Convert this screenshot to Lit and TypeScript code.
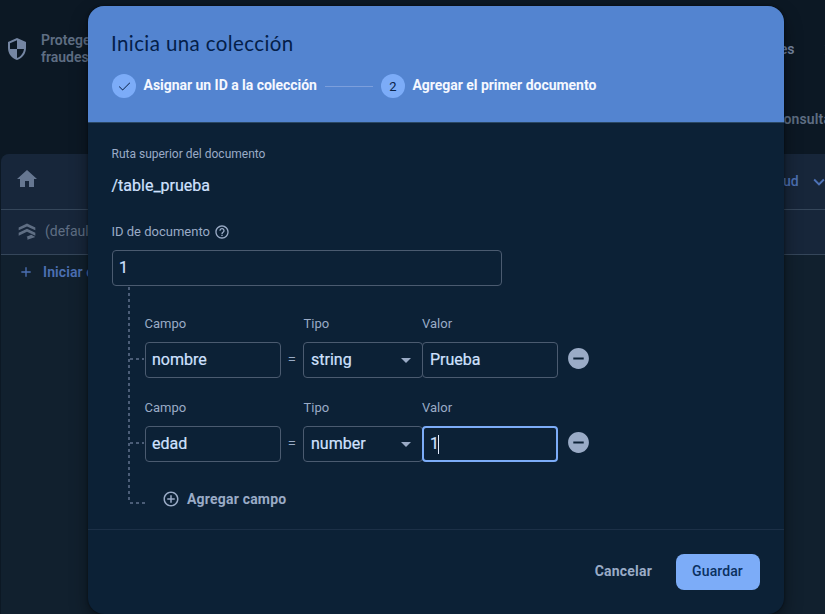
import { LitElement, html, css, svg, nothing } from "lit";
import { customElement, property } from "lit/decorators.js";
import { classMap } from "lit/directives/class-map.js";

const ICONS: Record<string, string> = {
  shield: "M12 1 3 5v6c0 5.55 3.84 10.74 9 12 5.16-1.26 9-6.45 9-12V5l-9-4zm0 10.99h7c-.53 4.12-3.28 7.79-7 8.94V12H5V6.3l7-3.11v8.8z",
  home: "M10 20v-6h4v6h5v-8h3L12 3 2 12h3v8z",
  plus: "M19 13h-6v6h-2v-6H5v-2h6V5h2v6h6v2z",
  check: "M9 16.700 3.900 11.600l-.9.9L9 18.500 21 6.500l-.9-.9z",
  help: "M11 18h2v-2h-2v2zm1-16C6.48 2 2 6.48 2 12s4.48 10 10 10 10-4.48 10-10S17.52 2 12 2zm0 18c-4.41 0-8-3.59-8-8s3.59-8 8-8 8 3.59 8 8-3.59 8-8 8zm0-14c-2.21 0-4 1.79-4 4h2c0-1.1.9-2 2-2s2 .9 2 2c0 2-3 1.75-3 5h2c0-2.25 3-2.5 3-5 0-2.21-1.79-4-4-4z",
  remove: "M12 2C6.48 2 2 6.48 2 12s4.48 10 10 10 10-4.48 10-10S17.52 2 12 2zm5 11H7v-2h10v2z",
  add: "M13 7h-2v4H7v2h4v4h2v-4h4v-2h-4V7zm-1-5C6.48 2 2 6.48 2 12s4.48 10 10 10 10-4.48 10-10S17.52 2 12 2zm0 18c-4.41 0-8-3.59-8-8s3.59-8 8-8 8 3.59 8 8-3.59 8-8 8z",
  expand: "M16.59 8.59 12 13.17 7.41 8.59 6 10l6 6 6-6z",
  database: "M12 3 2 7.800v3.400l10-4.700 10 4.700V7.800zM12 9.300 2 14v3.600l10-4.800 10 4.800V14zM11.500 19l5.500-2.400 5 2.600-9.500 3.300v-2.300z",
  close: "M19 6.41 17.59 5 12 10.59 6.41 5 5 6.41 10.59 12 5 17.590 6.410 19 12 13.410 17.590 19 19 17.590 13.410 12z",
};

@customElement("ui-icon")
export class UiIcon extends LitElement {
  @property() name = "";
  @property({ type: Number }) size = 24;
  static styles = css`
    :host { display: inline-flex; flex: none; }
    svg { display: block; fill: currentColor; }
  `;
  render() {
    return html`<svg width=${this.size} height=${this.size} viewBox="0 0 24 24">${svg`<path d=${ICONS[this.name]}></path>`}</svg>`;
  }
}

@customElement("field-row")
export class FieldRow extends LitElement {
  @property() name = "";
  @property() type = "";
  @property() value = "";
  @property({ type: Boolean }) focused = false;
  static styles = css`
    :host {
      display: grid;
      grid-template-columns: 16px 136px 22px 119px 136px 41px;
      grid-template-rows: 16px 36px;
      row-gap: 10px;
      height: 84px;
    }
    .label { font-size: 13px; line-height: 16px; color: #9aabc6; }
    .campo { grid-column: 2; margin-left: -.5px; }
    .tipo { grid-column: 4; margin-left: .5px; }
    .valor { grid-column: 5; }
    .branch { grid-column: 1; align-self: center; height: 2px; margin: -2px 1px 0 0;
      background: repeating-linear-gradient(90deg, transparent 0 1px, #4b5d77 1px 4px, transparent 4px 6px); }
    .box {
      box-sizing: border-box; height: 36px; border: 1px solid #4b5b70; border-radius: 4px;
      padding: 0 7px; font-size: 16px; display: flex; align-items: center; color: #d0e1ff;
      background: #0c2136; min-width: 0; -webkit-text-stroke: .2px #d0e1ff;
    }
    .box span { line-height: 20px; margin-top: -1px; }
    .name { padding-left: 6px; }
    .select { width: 120px; justify-content: space-between; padding-right: 11px; }
    .arrow { border: 5px solid transparent; border-top-color: #9aabc6; border-bottom: 0; }
    .value { z-index: 1; }
    .active { border: 2px solid #7cacf8; padding: 0 6px; }
    .caret { width: 1px; height: 19px; background: #e4edff; margin-left: -1px; }
    .eq { font-size: 15px; color: #9aabc6; align-self: center; text-align: center; margin-top: -3px; font-weight: 300; }
    .remove { color: #9aabc6; display: flex; align-items: center; justify-content: center; margin-top: -4px; }
  `;
  render() {
    return html`
      <span class="label campo">Campo</span>
      <span class="label tipo">Tipo</span>
      <span class="label valor">Valor</span>
      <div class="branch"></div>
      <div class="box name"><span>${this.name}</span></div>
      <span class="eq">=</span>
      <div class="box select"><span>${this.type}</span><i class="arrow"></i></div>
      <div class=${classMap({ box: true, value: true, active: this.focused })}>
        <span>${this.value}</span>${this.focused ? html`<i class="caret"></i>` : nothing}
      </div>
      <div class="remove"><ui-icon name="remove" size="25"></ui-icon></div>
    `;
  }
}

@customElement("app-root")
export class AppRoot extends LitElement {
  private fields = [
    { name: "nombre", type: "string", value: "Prueba", focused: false },
    { name: "edad", type: "number", value: "1", focused: true },
  ];

  static styles = css`
    :host {
      display: block; position: relative; width: 825px; height: 614px; overflow: hidden;
      background: #0c1824; font-family: Roboto, sans-serif; white-space: nowrap;
    }
    .page { height: 614px; display: flex; flex-direction: column; font-size: 14px; font-weight: 500; color: #5f6e83; }
    .top { height: 154px; display: grid; grid-template-columns: 1fr auto; box-sizing: border-box; padding: 32px 0 0 5px; }
    .notice { display: flex; gap: 12px; line-height: 17px; font-weight: 600; }
    .notice ui-icon { color: #7586a3; margin-top: 5px; }
    .right { display: flex; flex-direction: column; width: 49px; gap: 54px; line-height: 16px; padding-top: 9px; font-weight: 600; }
    .right > span { letter-spacing: .15px; }
    .right .tabs { display: flex; justify-content: space-between; height: 16px; color: #7586a3; margin-left: -4px; }
    .right .more { color: #3e63a5; margin-right: -14px; }
    .panel { margin-left: 1px; flex: 1; background: #11202e; border-top-left-radius: 8px; overflow: hidden; }
    .bar { display: flex; align-items: center; justify-content: space-between; background: #17263a; border-bottom: 1px solid #35465a; box-sizing: border-box; }
    .crumbs { height: 56px; padding: 0 0 6px 14px; color: #667791; }
    .cloud { display: flex; align-items: center; width: 50px; gap: 9px; color: #4c70b4; }
    .cloud span { margin-top: 4px; }
    .cloud ui-icon { margin-top: 6px; }
    .db { height: 45px; padding: 0 0 2px 16px; justify-content: flex-start; gap: 8px; font-weight: 400; font-size: 14px; }
    .start { display: flex; align-items: center; gap: 9px; height: 34px; padding-left: 17px; color: #4c70b4; font-weight: 600; letter-spacing: .1px; }

    .dialog {
      position: absolute; left: 88px; top: 6px; width: 696px; height: 608px; border-radius: 16px; overflow: hidden;
      background: #0c2136; box-shadow: 0 8px 18px rgba(0, 0, 0, .4), 0 0 3px rgba(0, 0, 0, .5);
      display: flex; flex-direction: column; box-sizing: border-box;
    }
    header { height: 117px; box-sizing: border-box; background: #5384d0; border-bottom: 1px solid #2b4864; padding: 25px 24px 0; }
    h1 { margin: 0 0 0 -1px; font: 400 20.500px/24px Lato, sans-serif; letter-spacing: .4px; color: #041e49; }
    .steps { display: flex; align-items: center; margin-top: 19px; font-size: 14px; font-weight: 700; color: #f5f8ff; height: 24px; letter-spacing: -.03px; }
    .steps > span:not(.dot) { margin: -2px 0 0 -.5px; }
    .dot { width: 24px; height: 24px; border-radius: 50%; background: #7cacf8; color: #0a2348; display: flex; align-items: center; justify-content: center; font-weight: 400; font-size: 13px; margin-right: 8px; }
    .rule { width: 48px; height: 1px; background: #7c9fdc; margin: 0 8px; }
    .body { height: 407px; box-sizing: border-box; padding: 23px 24px 0; border-bottom: 1px solid #1c3047; }
    .label { height: 16px; font-size: 13px; line-height: 16px; color: #9aabc6; display: flex; align-items: center; gap: 4px; margin-left: -.5px; }
    .parent { font-size: 12px; }
    .path { font-size: 16px; line-height: 20px; color: #d0e1ff; margin: 14px 0 28px -.5px; -webkit-text-stroke: .2px #d0e1ff; }
    .docid { box-sizing: border-box; width: 390px; height: 36px; margin-top: 10px; border: 1px solid #4b5b70; border-radius: 4px; padding: 0 6px; font-size: 16px; line-height: 33px; color: #d0e1ff; -webkit-text-stroke: .2px #d0e1ff; }
    .tree { display: flex; }
    .trunk { width: 2px; height: 214px; margin: 1px 0 0 16px; flex: none; background: repeating-linear-gradient(180deg, #4b5d77 0 3px, transparent 3px 6px); }
    .rows { padding-top: 30px; margin-left: -1px; }
    .append { display: flex; align-items: center; height: 20px; margin-top: 5px; font-size: 14px; font-weight: 700; color: #9aabc6; letter-spacing: .2px; }
    .append span { margin-top: -1px; }
    .twig { width: 15px; height: 2px; margin: 7px 17px 0 1px; background: repeating-linear-gradient(90deg, #4b5d77 0 3px, transparent 3px 6px); }
    .append ui-icon { margin-right: 7px; }
    footer { display: flex; justify-content: flex-end; align-items: center; gap: 24px; padding: 24px 24px 0 0; font-size: 14px; font-weight: 700; color: #9aabc6; }
    footer > span { margin-top: -2px; letter-spacing: .2px; }
    .save { width: 84px; height: 36px; border-radius: 8px; background: #7cacf8; color: #0a305f; display: flex; align-items: center; justify-content: center; box-sizing: border-box; padding: 0 1px 2px 0; font-weight: 500; letter-spacing: .1px; }
  `;

  render() {
    return html`
      <div class="page">
        <div class="top">
          <div class="notice"><ui-icon name="shield" size="24"></ui-icon><span>Protege<br />fraudes</span></div>
          <div class="right">
            <div class="tabs"><span>nes</span><ui-icon class="more" name="close" size="18"></ui-icon></div>
            <span>consultas</span>
          </div>
        </div>
        <div class="panel">
          <div class="bar crumbs"><ui-icon name="home" size="24"></ui-icon><div class="cloud"><span>oud</span><ui-icon name="expand" size="22"></ui-icon></div></div>
          <div class="bar db"><ui-icon name="database" size="20"></ui-icon><span>(default)</span></div>
          <div class="start"><ui-icon name="plus" size="16"></ui-icon><span>Iniciar colección</span></div>
        </div>
      </div>
      <section class="dialog">
        <header>
          <h1>Inicia una colección</h1>
          <div class="steps">
            <span class="dot"><ui-icon name="check" size="15"></ui-icon></span><span>Asignar un ID a la colección</span>
            <i class="rule"></i>
            <span class="dot">2</span><span>Agregar el primer documento</span>
          </div>
        </header>
        <div class="body">
          <div class="label parent">Ruta superior del documento</div>
          <div class="path">/table_prueba</div>
          <div class="label">ID de documento <ui-icon name="help" size="16"></ui-icon></div>
          <div class="docid">1</div>
          <div class="tree">
            <div class="trunk"></div>
            <div class="rows">
              ${this.fields.map((f) => html`<field-row .name=${f.name} .type=${f.type} .value=${f.value} .focused=${f.focused}></field-row>`)}
              <div class="append"><i class="twig"></i><ui-icon name="add" size="18"></ui-icon><span>Agregar campo</span></div>
            </div>
          </div>
        </div>
        <footer><span>Cancelar</span><div class="save">Guardar</div></footer>
      </section>
    `;
  }
}
